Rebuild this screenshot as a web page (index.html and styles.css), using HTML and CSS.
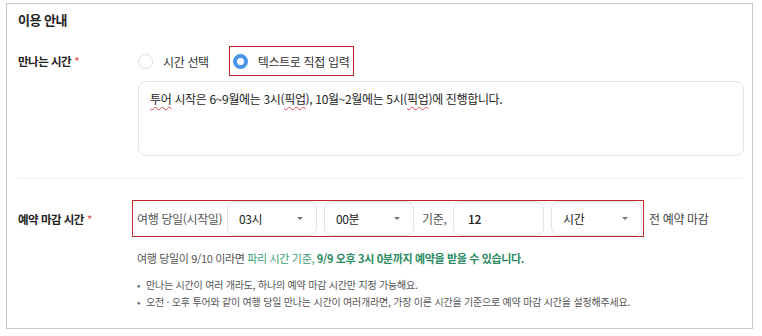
FILE: index.html
```html
<!DOCTYPE html>
<html lang="ko">
<head>
<meta charset="utf-8">
<link rel="stylesheet" href="styles.css">
</head>
<body>
<section class="panel">
  <h2 class="title">이용 안내</h2>

  <div class="row row-radio">
    <div class="label">만나는 시간<span class="req">*</span></div>
    <div class="content radios">
      <label class="opt"><span class="radio"></span>시간 선택</label>
      <label class="opt opt-marked"><span class="radio radio-on"></span>텍스트로 직접 입력</label>
    </div>
  </div>

  <div class="row">
    <div class="label"></div>
    <div class="content">
      <div class="textarea"><span class="typo">투어</span> 시작은 6~9월에는 3시(<span class="typo">픽업</span>), 10월~2월에는 5시(<span class="typo">픽업</span>)에 진행합니다.</div>
    </div>
  </div>

  <div class="divider"></div>

  <div class="row row-deadline">
    <div class="label">예약 마감 시간<span class="req">*</span></div>
    <div class="content deadline">
      <div class="marked-group">
        <span class="txt lead">여행 당일(시작일)</span>
        <div class="select"><span>03시</span><span class="caret"></span></div>
        <div class="select"><span>00분</span><span class="caret"></span></div>
        <span class="txt mid">기준,</span>
        <div class="input">12</div>
        <div class="select"><span>시간</span><span class="caret"></span></div>
      </div>
      <span class="txt after">전 예약 마감</span>
    </div>
  </div>

  <div class="row">
    <div class="label"></div>
    <div class="content notes">
      <p class="hint">여행 당일이 9/10 이라면 <span class="green">파리 시간 기준, </span><b class="green-b">9/9 오후 3시 0분까지 예약을 받을 수 있습니다.</b></p>
      <ul class="bullets">
        <li>만나는 시간이 여러 개라도, 하나의 예약 마감 시간만 지정 가능해요.</li>
        <li>오전 · 오후 투어와 같이 여행 당일 만나는 시간이 여러개라면, 가장 이른 시간을 기준으로 예약 마감 시간을 설정해주세요.</li>
      </ul>
    </div>
  </div>
</section>
</body>
</html>
```

FILE: styles.css
```css
* { box-sizing: border-box; }
html, body { margin: 0; padding: 0; background: #fff; }
body {
  font-family: "Noto Sans CJK KR", "Noto Sans", sans-serif;
  color: #222;
  font-size: 12px;
  letter-spacing: -0.35px;
}
.panel {
  margin: 3px 0 0 6px;
  width: 747px;
  border: 1px solid #c9c9c9;
  padding: 0 8px 18px 11px;
}
.title {
  margin: 6px 0 0;
  font-size: 13px;
  line-height: 20px;
  font-weight: 700;
  color: #222;
  letter-spacing: -0.5px;
}
.row { display: flex; align-items: center; }
.label {
  width: 120px;
  flex: none;
  font-size: 11.5px;
  font-weight: 700;
  color: #222;
  letter-spacing: -0.5px;
}
.req { color: #e5484d; font-weight: 400; margin-left: 3px; }
.content { flex: 1; min-width: 0; }
.row-radio { margin-top: 16px; height: 30px; }
.radios { display: flex; align-items: center; height: 30px; }
.opt {
  display: flex; align-items: center;
  font-size: 12px; color: #333;
  height: 30px;
}
.opt .radio { margin-right: 10px; }
.opt-marked {
  margin-left: 20px;
  border: 1px solid #c1272d;
  padding: 0 4px 0 3px;
}
.radio {
  width: 15px; height: 15px;
  border-radius: 50%;
  border: 1px solid #dcdcdc;
  background: #fff;
  flex: none;
}
.radio-on { border: 4px solid #4a95e6; }
.textarea {
  margin-top: 5px;
  height: 75px;
  border: 1px solid #e4e4e4;
  border-radius: 8px;
  padding: 8px 11px;
  line-height: 18px;
  font-size: 12px;
  color: #222;
}
.typo { text-decoration: underline wavy #e04848; text-decoration-thickness: 1px; text-underline-offset: 2px; }
.divider {
  margin: 22px 0 0;
  height: 1px;
  background: #efefef;
  width: 725px;
}
.row-deadline { margin-top: 21px; }
.deadline { display: flex; align-items: center; }
.marked-group {
  margin-left: -6px;
  display: flex; align-items: center;
  border: 1px solid #c1272d;
  padding: 0 1px 0 4px;
  height: 37px;
  gap: 7px;
}
.txt { font-size: 12px; color: #555; white-space: nowrap; flex: none; }
.lead { width: 83px; }
.mid { margin-left: 1px; width: 23px; }
.select, .input {
  flex: none;
  height: 35px;
  width: 90px;
  border: 1px solid #e4e4e4;
  border-radius: 8px;
  display: flex; align-items: center;
  padding: 0 11px;
  font-size: 12px; color: #222;
  background: #fff;
}
.select { justify-content: space-between; padding-right: 13px; }
.input { width: 91px; padding-left: 14px; font-weight: 500; margin-left: 1px; }
.select:last-child { width: 91px; }
.caret {
  width: 0; height: 0;
  border-left: 3px solid transparent;
  border-right: 3px solid transparent;
  border-top: 3px solid #777;
}
.after { margin-left: 5px; color: #444; }
.notes { margin-left: -1px; }
.hint {
  margin: 12px 0 0;
  line-height: 18px;
  font-size: 11px;
  color: #555;
}
.green { color: #3a9e70; }
.green-b { color: #2b8a63; font-weight: 700; }
.bullets {
  list-style: none;
  margin: 9px 0 0; padding: 0;
  font-size: 10px;
  line-height: 17px;
  color: #555;
  letter-spacing: -0.2px;
}
.bullets li::before {
  content: "•";
  display: inline-block;
  width: 9px;
  color: #666;
}
```
